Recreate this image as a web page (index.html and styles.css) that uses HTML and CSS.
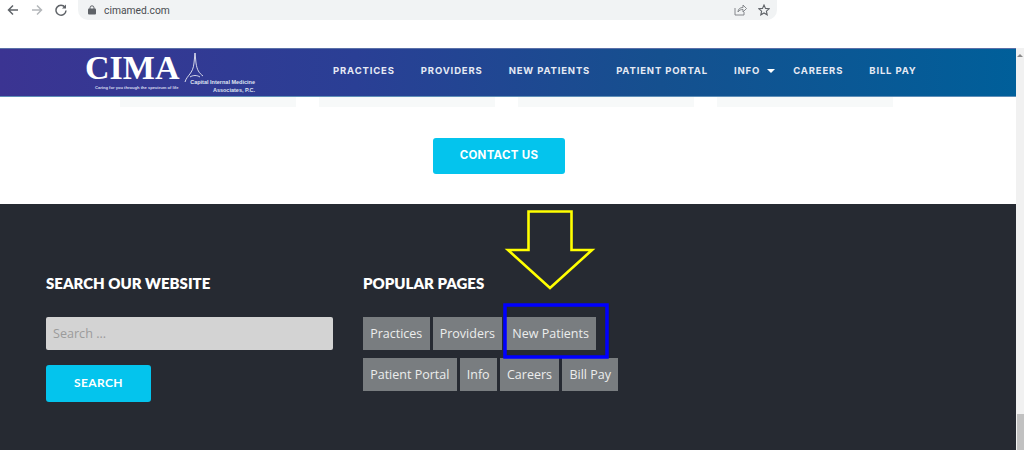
FILE: index.html
```html
<!DOCTYPE html>
<html>
<head>
    <meta charset="UTF-8">
    <title>CIMA</title>
    <link rel="stylesheet" href="styles.css">
</head>
<body>
<!--browser toolbar-->
<div class="toolbar">
    <div class="nav-icons">
        <svg class="tool-icon" viewBox="0 0 12 12"><path d="M11 6H2M6 1.500 1.500 6 6 10.500" fill="none" stroke="#5f6368" stroke-width="1.500"/></svg>
        <svg class="tool-icon" viewBox="0 0 12 12"><path d="M1 6h9M6 1.500 10.500 6 6 10.500" fill="none" stroke="#b4b7ba" stroke-width="1.500"/></svg>
        <svg class="tool-icon" viewBox="0 0 12 12"><path d="M10 3.200A5 5 0 1 0 11 6.500" fill="none" stroke="#5f6368" stroke-width="1.500"/><path d="M11 .6v4H7z" fill="#5f6368"/></svg>
    </div>
    <div class="address">
        <svg class="lock" viewBox="0 0 8 10"><path d="M2 4V2.800a2 2 0 0 1 4 0V4" fill="none" stroke="#5f6368"/><rect y="3.600" width="8" height="6" rx="1" fill="#5f6368"/></svg>
        <span class="url">cimamed.com</span>
        <svg class="share" viewBox="0 0 13 12"><path d="M1 4v7h9V8M4 8c0-3 2-4.500 5-4.500V1l3.500 3.500L9 8V5.500C7 5.500 5 6 4 8z" fill="none" stroke="#7a7e82" stroke-width=".9"/></svg>
        <svg class="star" viewBox="0 0 12 12"><path d="M6 1l1.500 3.400 3.700.4-2.800 2.400.8 3.600L6 9l-3.200 1.800.8-3.600L.8 4.800l3.700-.4z" fill="none" stroke="#5f6368" stroke-width="1.100"/></svg>
    </div>
</div>

<div class="viewport">
    <div class="page">
        <div class="header">
            <div class="logo">
                <div class="logo-left">
                    <div class="logo-name">CIMA</div>
                    <div class="logo-tag">Caring for you through the spectrum of life</div>
                </div>
                <svg class="spire" viewBox="0 0 20 42"><path d="M1 30C3 23 9 22 10 11L11 1l1 10c1 7 3 10 7 13M6 25c3-2 7-2 10 0" fill="none" stroke="#fff" stroke-width=".8"/></svg>
                <div class="logo-right">Capital Internal Medicine<br>Associates, P.C.</div>
            </div>
            <div class="menu">
                <a>PRACTICES</a>
                <a>PROVIDERS</a>
                <a>NEW PATIENTS</a>
                <a>PATIENT PORTAL</a>
                <a class="has-caret">INFO</a>
                <a>CAREERS</a>
                <a>BILL PAY</a>
            </div>
        </div>

        <div class="content">
            <div class="cards">
                <div class="card"></div>
                <div class="card"></div>
                <div class="card"></div>
                <div class="card"></div>
            </div>
            <a class="btn btn-contact">CONTACT US</a>
        </div>

        <div class="footer">
            <div class="col-search">
                <h3>SEARCH OUR WEBSITE</h3>
                <div class="search-box">Search ...</div>
                <a class="btn btn-search">SEARCH</a>
            </div>
            <div class="col-pages">
                <h3>POPULAR PAGES</h3>
                <div class="tags">
                    <a>Practices</a>
                    <a>Providers</a>
                    <a>New Patients</a>
                    <a>Patient Portal</a>
                    <a>Info</a>
                    <a>Careers</a>
                    <a>Bill Pay</a>
                </div>
            </div>
        </div>
    </div>
    <div class="scrollbar">
        <div class="scroll-up"></div>
        <div class="scroll-thumb"></div>
    </div>
</div>

<!--annotation drawn over the screenshot-->
<svg class="markup" viewBox="0 0 1024 450">
    <path d="M528.500 211.500H571.500V250H592L550 288 508 250H528.500z" fill="none" stroke="#ffff00" stroke-width="2.600"/>
    <rect x="505" y="305" width="102" height="52" fill="none" stroke="#0000ff" stroke-width="3.500"/>
</svg>
</body>
</html>
```

FILE: styles.css
```css
html, body {
    margin: 0;
    height: 450px;
    overflow: hidden;
    background: #fff;
}

body {
    position: relative;
    font-family: "Open Sans", "Liberation Sans", sans-serif;
}

a {
    display: block;
}

/* browser bar */
.toolbar {
    height: 48px;
    display: flex;
    align-items: flex-start;
}

.nav-icons {
    width: 78px;
    height: 20px;
    padding-left: 7px;
    box-sizing: border-box;
    display: flex;
    align-items: center;
    gap: 12px;
}

.tool-icon {
    width: 12px;
    height: 12px;
}

.address {
    width: 699px;
    height: 20px;
    padding-left: 10px;
    box-sizing: border-box;
    background: #f1f3f4;
    border-radius: 0 0 10px 10px;
    display: flex;
    align-items: center;
}

.lock {
    width: 8px;
    height: 10px;
}

.url {
    margin-left: 8px;
    font-family: Roboto, "Liberation Sans", sans-serif;
    font-size: 10.300px;
    color: #4a4d51;
    flex: 1;
}

.share {
    width: 13px;
    height: 12px;
}

.star {
    width: 12px;
    height: 12px;
    margin: 0 7px 0 11px;
}

/* page */
.viewport {
    display: flex;
    height: 402px;
}

.page {
    width: 1016px;
}

.scrollbar {
    width: 8px;
    background: #f1f1f1;
    display: flex;
    flex-direction: column;
    justify-content: space-between;
    align-items: center;
}

.scroll-up {
    margin-top: 6px;
    border-left: 3px solid transparent;
    border-right: 3px solid transparent;
    border-bottom: 3px solid #8a8a8a;
}

.scroll-thumb {
    width: 7px;
    height: 36px;
    background: #c1c1c1;
}

.header {
    height: 49px;
    padding-left: 85px;
    box-sizing: border-box;
    display: flex;
    align-items: center;
    background: linear-gradient(90deg, #3b3492 0%, #2a3f95 35%, #15508f 65%, #005f9a 100%);
    border-top: 1px solid #5a70a8;
    border-bottom: 1px solid #5f8fb8;
}

.logo {
    width: 248px;
    height: 47px;
    display: flex;
    color: #fff;
}

.logo-left {
    width: 98px;
    padding-top: 4px;
}

.logo-name {
    font-family: "Liberation Serif", serif;
    font-weight: bold;
    font-size: 34px;
    line-height: 30px;
}

.logo-tag {
    margin: 2px 0 0 10px;
    width: 100px;
    font-family: "Liberation Sans", sans-serif;
    font-weight: bold;
    font-size: 4.100px;
    white-space: nowrap;
    color: #d8dcf0;
}

.spire {
    width: 20px;
    height: 42px;
    margin: 3px 0 0 1px;
}

.logo-right {
    width: 66px;
    margin: 29px 0 0 -15px;
    font-family: "Liberation Sans", sans-serif;
    font-weight: bold;
    font-size: 5.500px;
    line-height: 8px;
    text-align: right;
    white-space: nowrap;
    color: #dfe3f2;
}

.menu {
    display: flex;
    gap: 26px;
    margin-bottom: 4px;
    font-family: Inter, "Liberation Sans", sans-serif;
    font-size: 9.500px;
    font-weight: 700;
    letter-spacing: .85px;
    color: #e6eaf4;
}

.has-caret {
    margin-right: -8px;
    padding-right: 15px;
    position: relative;
}

.has-caret:after {
    content: "";
    position: absolute;
    right: 0;
    top: 4px;
    border-left: 4px solid transparent;
    border-right: 4px solid transparent;
    border-top: 4px solid #fff;
}

.content {
    height: 107px;
    display: flex;
    flex-direction: column;
    align-items: center;
}

.cards {
    width: 100%;
    height: 10px;
    padding-left: 120px;
    box-sizing: border-box;
    display: flex;
    gap: 23px;
}

.card {
    width: 176px;
    background: #f7f9f9;
}

.btn {
    background: #04c4ed;
    color: #fff;
    border-radius: 3px;
    text-align: center;
    font-weight: 700;
}

.btn-contact {
    width: 132px;
    height: 36px;
    margin: 31px 18px 0 0;
    font-family: Inter, "Liberation Sans", sans-serif;
    font-size: 11.500px;
    line-height: 35px;
    letter-spacing: .3px;
}

.footer {
    height: 246px;
    padding: 69px 0 0 46px;
    box-sizing: border-box;
    background: #262a32;
    display: flex;
    gap: 30px;
}

.footer h3 {
    margin: 0 0 24px;
    font-family: Lato, "Liberation Sans", sans-serif;
    font-size: 15px;
    line-height: 20px;
    font-weight: 800;
    color: #fff;
}

.col-search {
    width: 287px;
}

.search-box {
    height: 33px;
    padding-left: 7px;
    background: #d3d3d3;
    border-radius: 2px;
    font-size: 12.600px;
    line-height: 33px;
    color: #9b9b9b;
}

.btn-search {
    width: 105px;
    height: 37px;
    margin-top: 15px;
    font-family: Lato, "Liberation Sans", sans-serif;
    font-size: 12px;
    line-height: 36px;
    letter-spacing: .4px;
}

.col-pages {
    width: 260px;
}

.tags {
    display: flex;
    flex-wrap: wrap;
    gap: 8px 3px;
}

.tags a {
    height: 33px;
    padding: 0 7.200px;
    background: #797d80;
    font-size: 12.500px;
    line-height: 33px;
    color: #eceded;
}

.markup {
    position: absolute;
    left: 0;
    top: 0;
    width: 1024px;
    height: 450px;
}
```
